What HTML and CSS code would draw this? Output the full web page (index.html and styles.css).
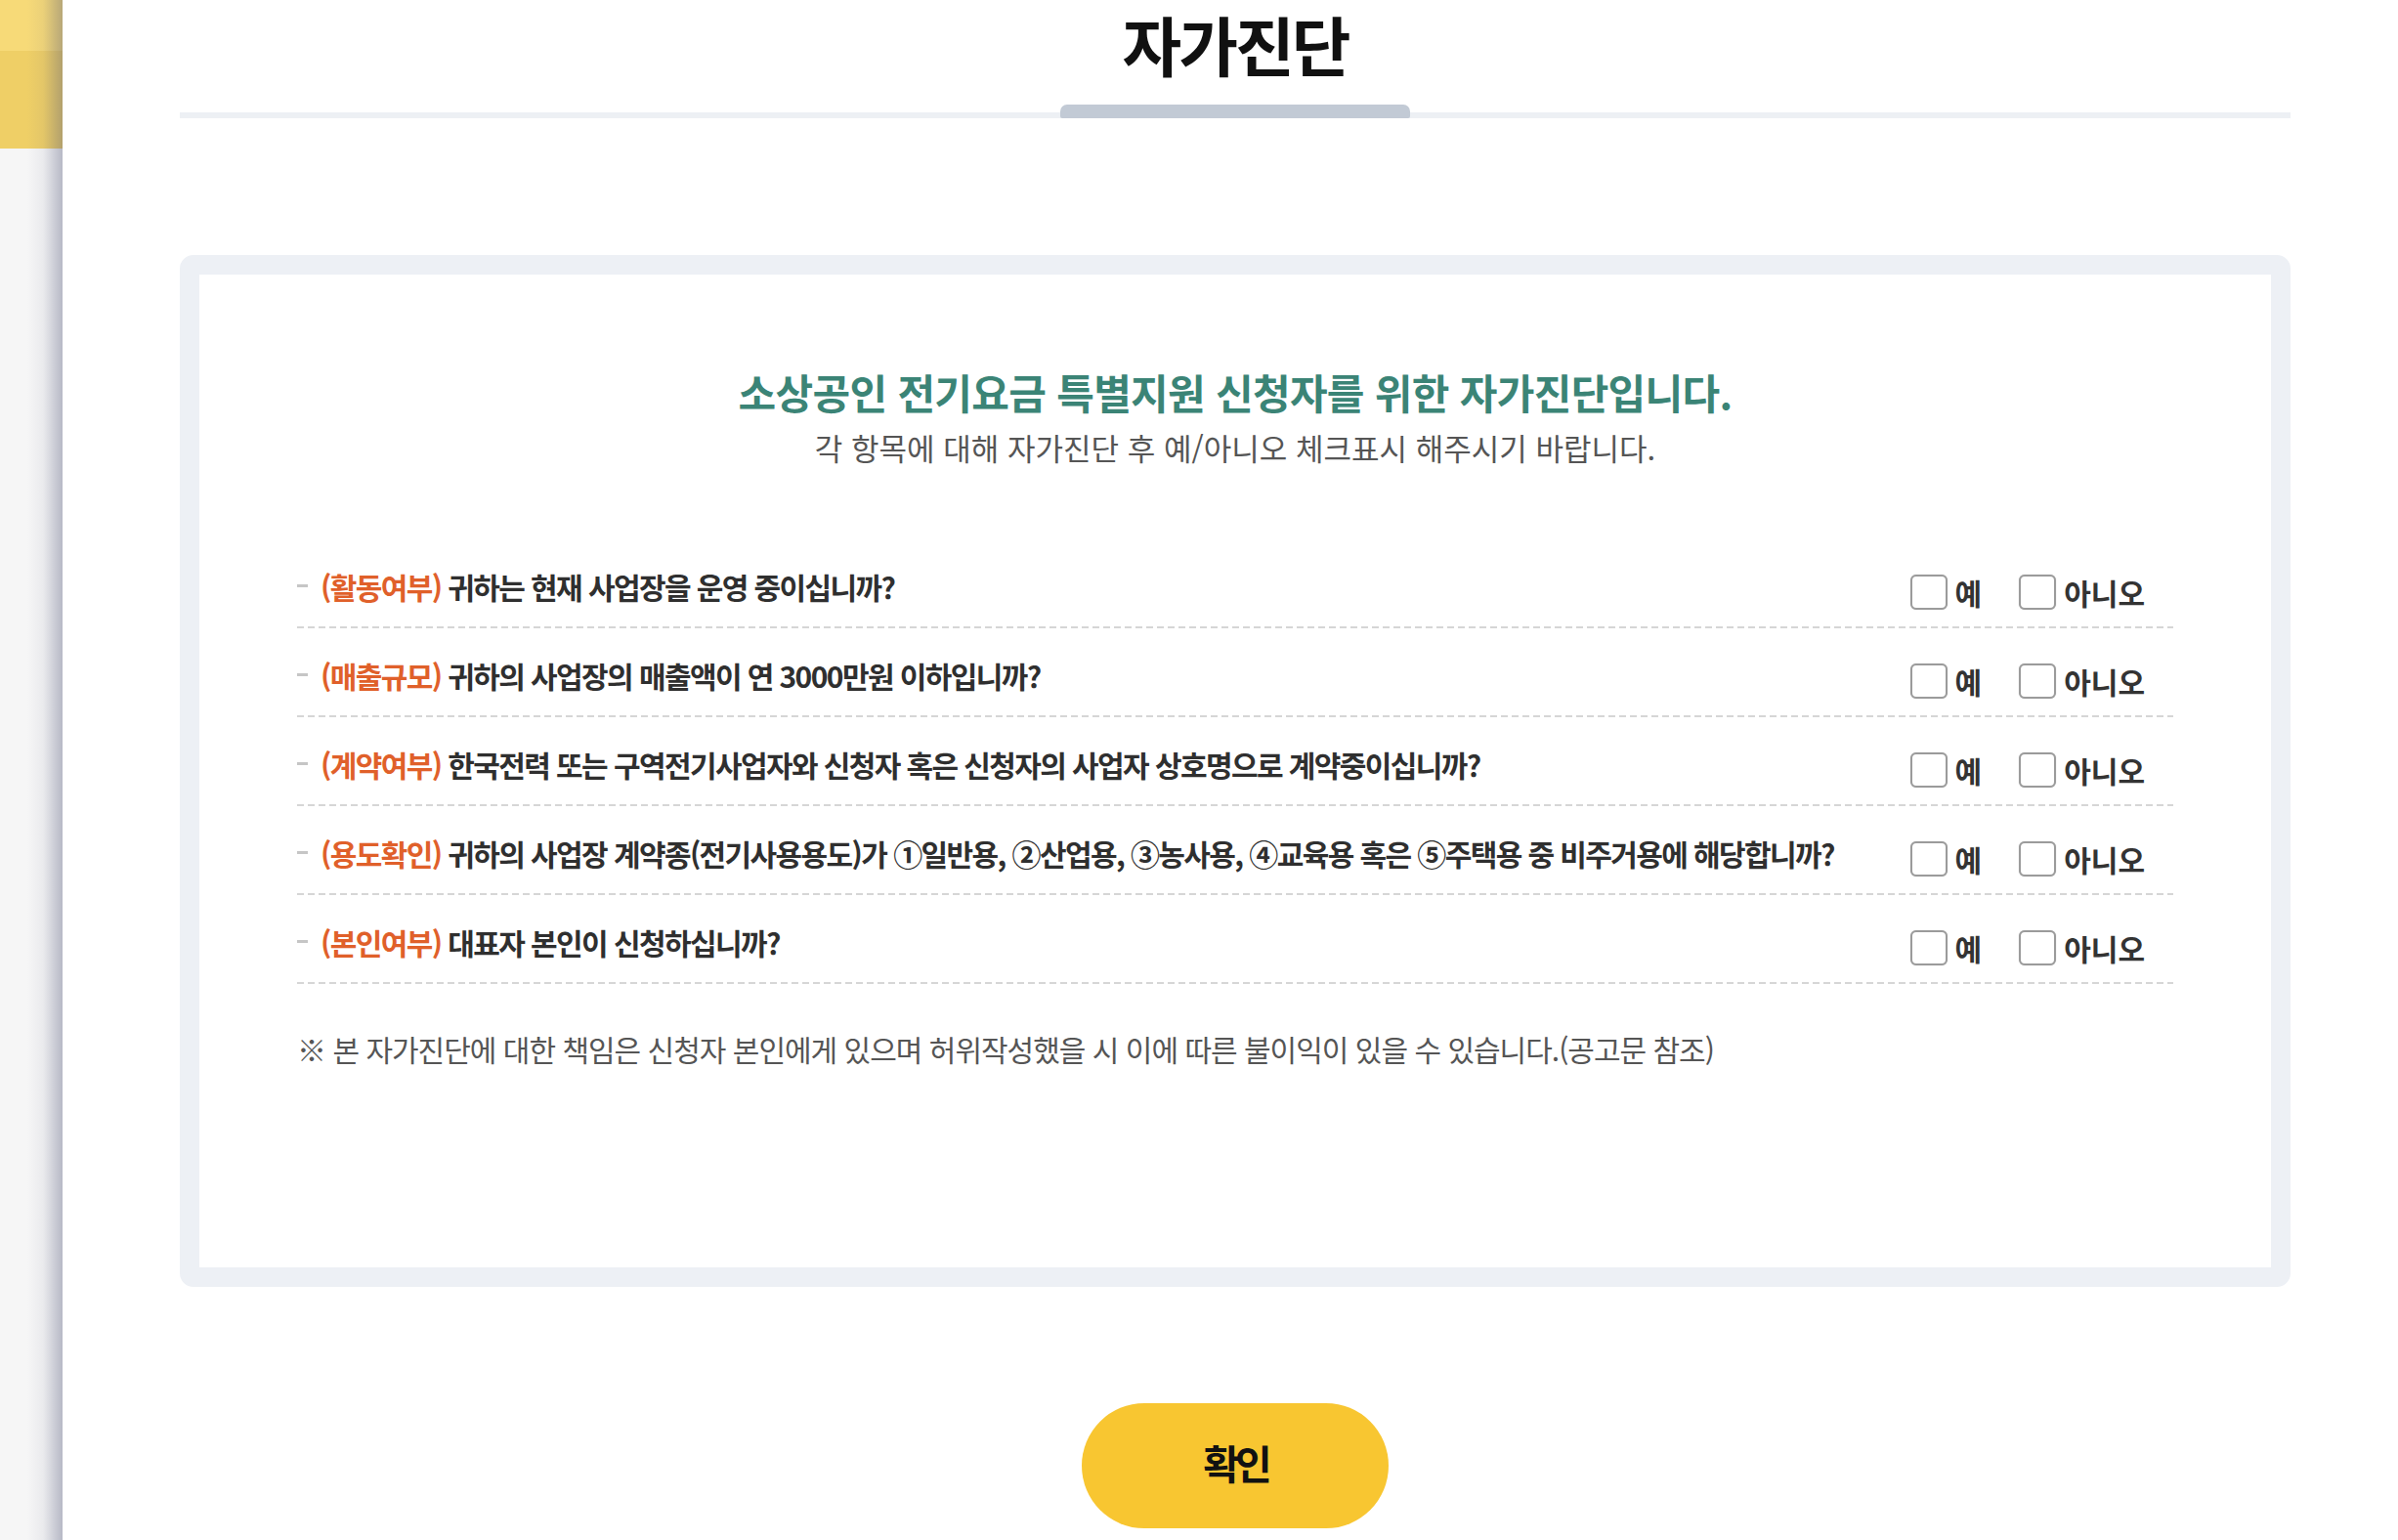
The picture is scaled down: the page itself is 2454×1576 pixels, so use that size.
FILE: index.html
```html
<!DOCTYPE html>
<html lang="ko">
<head>
    <meta charset="UTF-8">
    <title>자가진단</title>
    <link rel="stylesheet" href="styles.css">
</head>
<body>
    <aside class="side">
        <div class="side-top"></div>
        <div class="side-mid"></div>
    </aside>

    <main class="content">
        <div class="title-wrap">
            <h1 class="title">자가진단</h1>
            <div class="title-bar"><span class="title-bar-active"></span></div>
        </div>

        <section class="check-box">
            <div class="intro">
                <h2 class="intro-title">소상공인 전기요금 특별지원 신청자를 위한 자가진단입니다.</h2>
                <p class="intro-desc">각 항목에 대해 자가진단 후 예/아니오 체크표시 해주시기 바랍니다.</p>
            </div>

            <ul class="q-list">
                <li class="q-item">
                    <span class="q-dash"></span>
                    <p class="q-text"><span class="q-label">(활동여부)</span> 귀하는 현재 사업장을 운영 중이십니까?</p>
                    <div class="opts">
                        <label class="opt"><span class="chk"></span>예</label>
                        <label class="opt"><span class="chk"></span>아니오</label>
                    </div>
                </li>
                <li class="q-item">
                    <span class="q-dash"></span>
                    <p class="q-text"><span class="q-label">(매출규모)</span> 귀하의 사업장의 매출액이 연 3000만원 이하입니까?</p>
                    <div class="opts">
                        <label class="opt"><span class="chk"></span>예</label>
                        <label class="opt"><span class="chk"></span>아니오</label>
                    </div>
                </li>
                <li class="q-item">
                    <span class="q-dash"></span>
                    <p class="q-text"><span class="q-label">(계약여부)</span> 한국전력 또는 구역전기사업자와 신청자 혹은 신청자의 사업자 상호명으로 계약중이십니까?</p>
                    <div class="opts">
                        <label class="opt"><span class="chk"></span>예</label>
                        <label class="opt"><span class="chk"></span>아니오</label>
                    </div>
                </li>
                <li class="q-item">
                    <span class="q-dash"></span>
                    <p class="q-text"><span class="q-label">(용도확인)</span> 귀하의 사업장 계약종(전기사용용도)가 ①일반용, ②산업용, ③농사용, ④교육용 혹은 ⑤주택용 중 비주거용에 해당합니까?</p>
                    <div class="opts">
                        <label class="opt"><span class="chk"></span>예</label>
                        <label class="opt"><span class="chk"></span>아니오</label>
                    </div>
                </li>
                <li class="q-item">
                    <span class="q-dash"></span>
                    <p class="q-text"><span class="q-label">(본인여부)</span> 대표자 본인이 신청하십니까?</p>
                    <div class="opts">
                        <label class="opt"><span class="chk"></span>예</label>
                        <label class="opt"><span class="chk"></span>아니오</label>
                    </div>
                </li>
            </ul>

            <p class="note">※ 본 자가진단에 대한 책임은 신청자 본인에게 있으며 허위작성했을 시 이에 따른 불이익이 있을 수 있습니다.(공고문 참조)</p>
        </section>

        <div class="btn-wrap">
            <button class="btn-confirm" type="button">확인</button>
        </div>
    </main>
</body>
</html>
```

FILE: styles.css
```css
body {
    margin: 0;
    font-family: "Noto Sans CJK KR", "Noto Sans", sans-serif;
    background-color: #fff;
    color: #333;
    display: flex;
    height: 100vh;
    overflow: hidden;
}

/* 왼쪽 사이드 */
.side {
    position: relative;
    width: 64px;
    flex-shrink: 0;
    background-color: #f6f6f6;
}

.side::after {
    content: "";
    position: absolute;
    top: 0;
    right: 0;
    bottom: 0;
    width: 36px;
    background: linear-gradient(to right, rgba(90, 95, 130, 0) 0%, rgba(90, 95, 130, 0.08) 45%, rgba(80, 85, 120, 0.38) 100%);
}

.side-top {
    height: 52px;
    background-color: #f7da78;
}

.side-mid {
    height: 100px;
    background-color: #efcf66;
}

.content {
    width: 2160px;
    margin-left: 120px;
}

/* 타이틀 */
.title-wrap {
    padding-top: 4px;
}

.title {
    margin: 0;
    font-size: 66px;
    line-height: 80px;
    font-weight: 700;
    letter-spacing: -3px;
    text-align: center;
    color: #111;
}

.title-bar {
    position: relative;
    height: 6px;
    margin-top: 31px;
    background-color: #edf0f4;
}

.title-bar-active {
    position: absolute;
    left: 901px;
    bottom: 0;
    width: 358px;
    height: 14px;
    border-radius: 7px 7px 2px 2px;
    background-color: #c2cad5;
}

/* 자가진단 박스 */
.check-box {
    margin-top: 140px;
    border: 20px solid #edf0f5;
    border-radius: 14px;
    padding: 99px 100px 209px;
}

.intro {
    text-align: center;
}

.intro-title {
    margin: 0;
    font-size: 42px;
    line-height: 42px;
    font-weight: 700;
    letter-spacing: -0.7px;
    color: #3b8476;
}

.intro-desc {
    margin: 20px 0 0;
    font-size: 31px;
    line-height: 32px;
    letter-spacing: 0;
    color: #555;
}

.q-list {
    list-style: none;
    margin: 78px 0 0;
    padding: 0;
}

.q-item {
    display: flex;
    align-items: flex-start;
    padding: 36px 0 19px;
    background-image: repeating-linear-gradient(to right, #d6d6d6 0 7px, transparent 7px 11px);
    background-size: 100% 2px;
    background-position: left bottom;
    background-repeat: no-repeat;
}

.q-dash {
    width: 11px;
    height: 3px;
    margin: 10px 13px 0 0;
    background-color: #c6c6c6;
}

.q-text {
    flex: 1;
    margin: -5px 0 0;
    font-size: 30px;
    line-height: 34px;
    font-weight: 700;
    letter-spacing: -1.6px;
    color: #2f2f2f;
}

.q-label {
    color: #e0602a;
}

.opts {
    display: flex;
    gap: 38px;
    margin-right: 29px;
}

.opt {
    display: flex;
    align-items: center;
    gap: 8px;
    font-size: 30px;
    line-height: 36px;
    font-weight: 700;
    letter-spacing: 0;
    color: #333;
}

.chk {
    width: 34px;
    height: 32px;
    border: 2px solid #9b9b9b;
    border-radius: 6px;
    background-color: #fff;
    box-shadow: 0 0 1px rgba(0, 0, 0, 0.3);
}

.note {
    margin: 51px 0 0;
    font-size: 30px;
    line-height: 30px;
    letter-spacing: -1px;
    color: #555;
}

/* 확인 버튼 */
.btn-wrap {
    display: flex;
    justify-content: center;
    margin-top: 119px;
}

.btn-confirm {
    width: 314px;
    height: 128px;
    padding: 0 0 8px;
    border: none;
    border-radius: 64px;
    background-color: #f8c631;
    font-family: inherit;
    font-size: 41px;
    font-weight: 700;
    letter-spacing: -5px;
    color: #111;
    cursor: pointer;
}
```
